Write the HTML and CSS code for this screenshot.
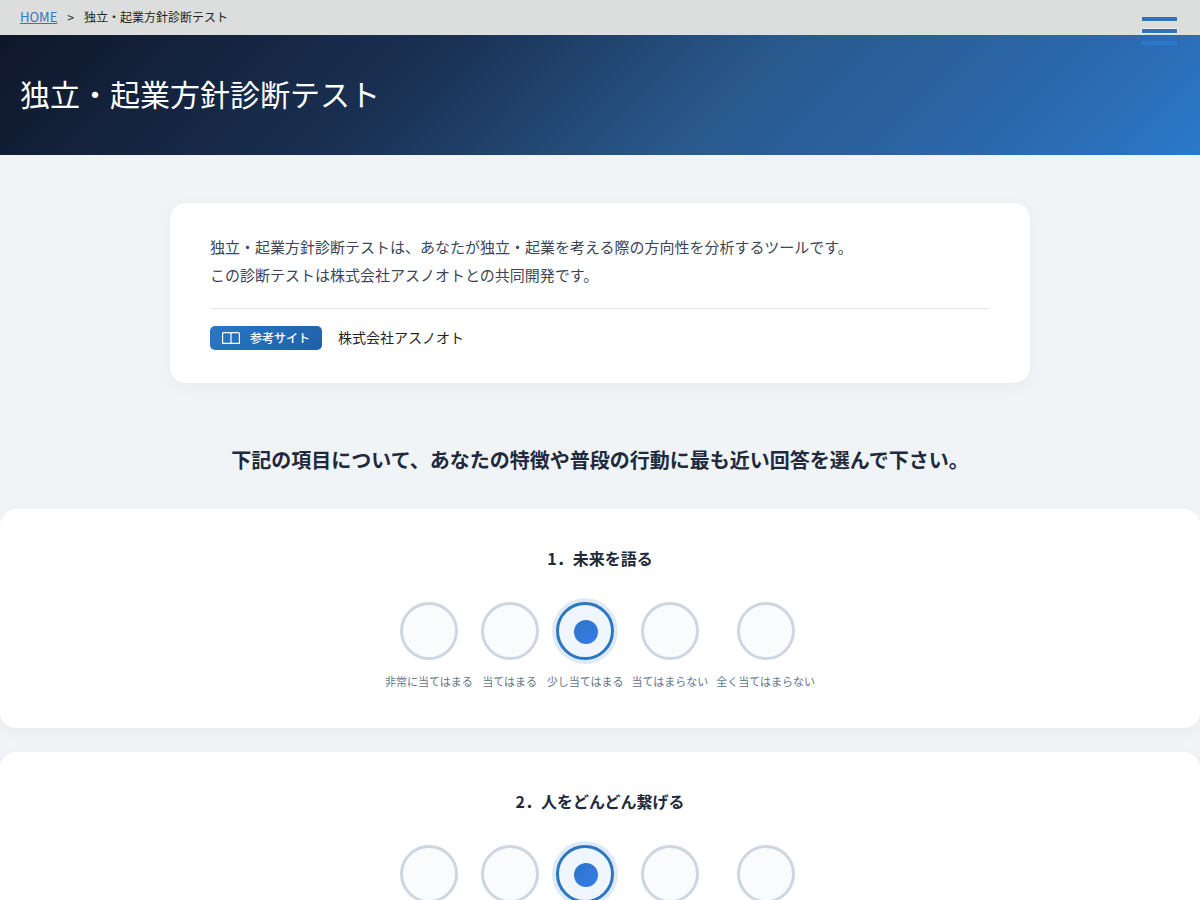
FILE: index.html
```html
<!DOCTYPE html>
<html lang="ja">
<head>
<meta charset="utf-8">
<meta name="viewport" content="width=device-width, initial-scale=1">
<title>独立・起業方針診断テスト</title>
<link rel="stylesheet" href="styles.css">
</head>
<body>
<button class="menu-button" type="button" aria-label="メニュー"><span class="menu-line"></span><span class="menu-line"></span><span class="menu-line"></span></button>
<nav class="breadcrumb">
  <a class="breadcrumb-home" href="#">HOME</a>
  <span>&gt;</span>
  <span>独立・起業方針診断テスト</span>
</nav>
<header class="hero"><h1 class="hero-title">独立・起業方針診断テスト</h1></header>
<main>
  <section class="intro">
    <p class="intro-text">独立・起業方針診断テストは、あなたが独立・起業を考える際の方向性を分析するツールです。<br>この診断テストは株式会社アスノオトとの共同開発です。</p>
    <div class="reference">
      <span class="tag"><svg class="tag-icon" viewBox="0 0 18 12" aria-hidden="true"><path d="M9 1.5V11M9 1.5Q8.5.6 7.5.6H1.8Q.6.6.6 1.8V11.4H7.5Q8.6 11.4 9 11Q9.4 11.4 10.5 11.4H17.4V1.8Q17.4.6 16.2.6H10.5Q9.5.6 9 1.5"/></svg>参考サイト</span>
      <a class="reference-link" href="#">株式会社アスノオト</a>
    </div>
  </section>
  <h2 class="lead">下記の項目について、あなたの特徴や普段の行動に最も近い回答を選んで下さい。</h2>
  <form class="questions">
    <fieldset class="question">
      <legend class="question-title">1．未来を語る</legend>
      <div class="options">
        <label class="option"><input class="radio" type="radio" name="q1">非常に当てはまる</label>
        <label class="option"><input class="radio" type="radio" name="q1">当てはまる</label>
        <label class="option"><input class="radio" type="radio" name="q1" checked>少し当てはまる</label>
        <label class="option"><input class="radio" type="radio" name="q1">当てはまらない</label>
        <label class="option"><input class="radio" type="radio" name="q1">全く当てはまらない</label>
      </div>
    </fieldset>
    <fieldset class="question">
      <legend class="question-title">2．人をどんどん繋げる</legend>
      <div class="options">
        <label class="option"><input class="radio" type="radio" name="q2">非常に当てはまる</label>
        <label class="option"><input class="radio" type="radio" name="q2">当てはまる</label>
        <label class="option"><input class="radio" type="radio" name="q2" checked>少し当てはまる</label>
        <label class="option"><input class="radio" type="radio" name="q2">当てはまらない</label>
        <label class="option"><input class="radio" type="radio" name="q2">全く当てはまらない</label>
      </div>
    </fieldset>
  </form>
</main>
</body>
</html>
```
FILE: styles.css
```css
* { box-sizing: border-box; }
html { scrollbar-width: none; }
body {
  margin: 0;
  background: #f0f4f7;
  color: #222;
  font-family: "Noto Sans CJK JP", sans-serif;
}
.breadcrumb {
  display: flex;
  align-items: center;
  gap: 10px;
  height: 35px;
  padding: 0 20px 2px;
  background: #dcdedd;
  font-size: 12px;
}
.breadcrumb-home { color: #2878c4; font-size: 13px; }
.menu-button {
  position: fixed;
  top: 17px;
  right: 23px;
  display: flex;
  flex-direction: column;
  gap: 8px;
  width: 35px;
  padding: 0;
  border: 0;
  background: none;
}
.menu-line { width: 100%; height: 4px; background: #2b75c0; }
.menu-line:nth-child(2) { box-shadow: 0 0 1px 1px rgba(255, 255, 255, .4); }
.menu-line:nth-child(3) { background: #2b78c8; }
.hero {
  display: flex;
  align-items: center;
  min-height: 120px;
  padding: 0 20px 4px;
  background: linear-gradient(135deg, #0f172a 0%, #1a3154 35%, #29598d 60%, #2b69ae 85%, #2b7acb 100%);
}
.hero-title { margin: 0; color: #fff; font-size: 30px; font-weight: 400; line-height: 44px; }
.intro {
  max-width: 860px;
  margin: 48px auto 0;
  padding: 30px 40px 33px;
  border-radius: 16px;
  background: #fff;
  box-shadow: 0 4px 16px rgba(0, 0, 0, .04);
}
.intro-text {
  margin: 0 0 19px;
  color: #3b4659;
  font-size: 15px;
  line-height: 28px;
}
.reference {
  display: flex;
  align-items: flex-start;
  gap: 16px;
  padding-top: 17px;
  border-top: 1px solid #e2e6ea;
}
.tag {
  display: flex;
  align-items: center;
  gap: 10px;
  height: 24px;
  padding: 0 12px;
  border-radius: 5px;
  background: linear-gradient(135deg, #2b77c4, #205fa8);
  color: #fff;
  font-size: 12px;
  font-weight: 500;
  line-height: 22px;
}
.tag-icon { width: 18px; height: 12px; fill: none; stroke: #fff; stroke-width: 1.2; }
.reference-link { color: #222; font-size: 14px; line-height: 22px; text-decoration: none; }
.lead {
  margin: 60px 20px 32px;
  color: #202a3c;
  font-size: 20px;
  line-height: 34px;
  text-align: center;
}
.questions { display: flex; flex-direction: column; gap: 24px; padding-bottom: 24px; }
.question {
  min-width: 0;
  margin: 0;
  padding: 35px 20px 37px;
  border: 0;
  border-radius: 16px;
  background: #fff;
  box-shadow: 0 4px 16px rgba(0, 0, 0, .04);
}
.question-title {
  float: left;
  width: 100%;
  margin-bottom: 30px;
  padding: 0;
  color: #202a3c;
  font-size: 16px;
  font-weight: 700;
  line-height: 28px;
  text-align: center;
}
.options { display: flex; clear: both; justify-content: center; gap: 8px; }
.option {
  display: flex;
  flex-direction: column;
  align-items: center;
  gap: 11px;
  color: #65748a;
  font-size: 11px;
  line-height: 20px;
  white-space: nowrap;
}
.radio {
  appearance: none;
  display: grid;
  place-items: center;
  width: 58px;
  height: 58px;
  margin: 0;
  border: 3px solid #cdd6e1;
  border-radius: 50%;
  background: #f9fbfd;
}
.radio:checked {
  padding: 2px 0 0 2px;
  border-color: #2b77c0;
  background: #eff6ff;
  box-shadow: 0 0 0 4px #dfeaf6;
}
.radio:checked::before {
  content: "";
  width: 24px;
  height: 24px;
  border-radius: 50%;
  background: linear-gradient(135deg, #2b75c8, #397ce9);
}
```
